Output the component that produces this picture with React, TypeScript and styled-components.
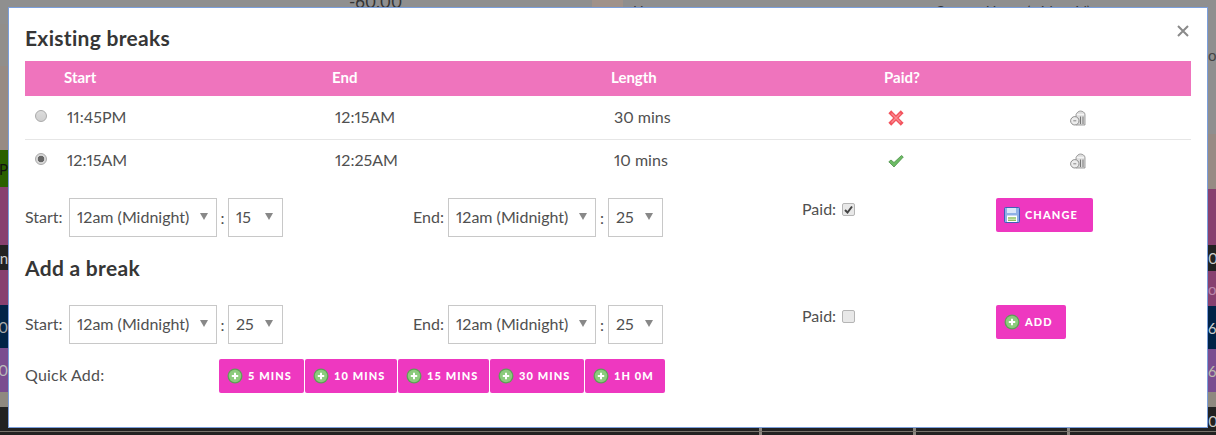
import React from "react";
import styled, { createGlobalStyle } from "styled-components";

const Global = createGlobalStyle`
  html, body { margin: 0; padding: 0; background: #8f8f8f; }
  body { font-family: Lato, "Noto Sans", sans-serif; font-variant-numeric: proportional-nums; overflow: hidden; }
  * { box-sizing: border-box; }
`;

const Page = styled.div`
  position: relative;
  width: 1216px;
  height: 435px;
  overflow: hidden;
  background: #8f8f8f;
`;

const Backdrop = styled.div`
  display: flex;
  justify-content: space-between;
  height: 100%;
`;

const Strip = styled.div`
  width: 8px;
  height: 100%;
  display: flex;
  flex-direction: column;
  overflow: hidden;
`;

const Band = styled.div<{ $h: number; $c: string; $fg?: string; $right?: boolean }>`
  height: ${(p) => p.$h}px;
  flex: none;
  background: ${(p) => p.$c};
  color: ${(p) => p.$fg || "#ccc"};
  font-size: 15px;
  display: flex;
  align-items: center;
  justify-content: ${(p) => (p.$right ? "flex-start" : "flex-end")};
  white-space: nowrap;
`;

const BottomEdge = styled.div`
  position: absolute;
  left: 0;
  right: 0;
  bottom: 0;
  height: 8px;
  background: #222;
  &::after {
    content: "";
    position: absolute;
    left: 0;
    right: 0;
    top: 4px;
    height: 1px;
    background: #77736c;
  }
`;

const BottomTick = styled.span<{ $x: number }>`
  position: absolute;
  left: ${(p) => p.$x}px;
  top: 0;
  width: 3px;
  height: 8px;
  background: #8a857e;
`;

const TopPatch = styled.div`
  position: absolute;
  left: 592px;
  top: 0;
  width: 31px;
  height: 8px;
  background: #a0928a;
`;

const TopText = styled.span<{ $x: number; $y: number; $s: number }>`
  position: absolute;
  left: ${(p) => p.$x}px;
  top: ${(p) => p.$y}px;
  font-size: ${(p) => p.$s}px;
  line-height: 1;
  color: #333;
  white-space: nowrap;
`;

const Modal = styled.div`
  position: absolute;
  left: 8px;
  top: 7px;
  width: 1200px;
  height: 421px;
  background: #fff;
  border: 1px solid #7b9fdc;
  padding: 15px 16px 0;
  color: #505050;
`;

const Close = styled.button`
  position: absolute;
  top: 15px;
  right: 17px;
  width: 14px;
  height: 16px;
  padding: 0;
  border: 0;
  background: none;
  display: flex;
  align-items: center;
`;

const Heading = styled.h2<{ $mt?: number }>`
  margin: ${(p) => p.$mt || 0}px 0 0;
  font-size: 21px;
  letter-spacing: 0.3px;
  line-height: 30px;
  height: 30px;
  font-weight: 700;
  color: #363636;
`;

const Columns = "39px 268px 279px 273px 182px 125px";

const HeadRow = styled.div`
  margin-top: 8px;
  display: grid;
  grid-template-columns: ${Columns};
  height: 35px;
  padding-bottom: 3px;
  align-items: center;
  background: #ef74bd;
  color: #fff;
  font-size: 15px;
  font-weight: 700;
`;

const Row = styled.div<{ $border?: boolean }>`
  display: grid;
  grid-template-columns: ${Columns};
  height: ${(p) => (p.$border ? 44 : 43)}px;
  padding-bottom: ${(p) => (p.$border ? 0 : 2)}px;
  align-items: center;
  border-bottom: ${(p) => (p.$border ? "1px solid #e6e6e6" : "0")};
  font-size: 16px;
`;

const Cell = styled.div`
  padding: 0 0 3px 3px;
  white-space: nowrap;
`;

const IconCell = styled.div`
  padding-left: 4px;
  display: flex;
  align-items: center;
`;

const Radio = styled.span<{ $on?: boolean }>`
  display: block;
  width: 12px;
  height: 12px;
  margin: -3px 0 0 10px;
  border-radius: 50%;
  border: 1px solid #a9a9a9;
  background: ${(p) =>
    p.$on
      ? "radial-gradient(circle, #666 0 3px, #d8d8d8 3.6px)"
      : "linear-gradient(#dcdcdc, #cfcfcf)"};
`;

const FormRow = styled.div<{ $mt: number }>`
  margin-top: ${(p) => p.$mt}px;
  display: grid;
  grid-template-columns: 388px 389px 194px 1fr;
  height: 39px;
  font-size: 16px;
`;

const TimeGroup = styled.div`
  display: flex;
  align-items: center;
  height: 39px;
`;

const FieldLabel = styled.span<{ $w: number }>`
  width: ${(p) => p.$w}px;
  flex: none;
  padding-bottom: 2px;
`;

const Colon = styled.span<{ $w: number }>`
  width: ${(p) => p.$w}px;
  text-align: center;
  flex: none;
`;

const Select = styled.div<{ $w: number; $pr: number }>`
  width: ${(p) => p.$w}px;
  height: 39px;
  flex: none;
  border: 1px solid #c8c8c8;
  display: flex;
  align-items: center;
  justify-content: space-between;
  padding: 0 ${(p) => p.$pr}px 2px 7px;
  white-space: nowrap;
  background: #fff;
`;

const Caret = styled.span`
  width: 0;
  height: 0;
  border-left: 4px solid transparent;
  border-right: 4px solid transparent;
  border-top: 7px solid #888;
`;

const PaidGroup = styled.div`
  display: flex;
  align-items: flex-start;
  padding-top: 1px;
  height: 39px;
`;

const PaidLabel = styled.span`
  line-height: 20px;
`;

const Check = styled.span`
  width: 13px;
  height: 13px;
  margin: 4px 0 0 6px;
  border: 1px solid #b5b5b5;
  border-radius: 2px;
  background: #e8e8e8;
  display: flex;
  align-items: center;
  justify-content: center;
`;

const Btn = styled.button<{ $w: number }>`
  width: ${(p) => p.$w}px;
  height: 34px;
  flex: none;
  padding: 0 0 1px 8px;
  border: 0;
  border-radius: 2px;
  background: #ee38c0;
  color: #fff;
  font-family: Lato, "Noto Sans", sans-serif;
  font-size: 11px;
  font-weight: 900;
  letter-spacing: 1.1px;
  display: flex;
  align-items: center;
  gap: 5px;
  white-space: nowrap;
`;

const BtnIcon = styled.svg`
  flex: none;
  margin-top: 1px;
`;

const QuickRow = styled.div`
  margin-top: 15px;
  display: flex;
  align-items: center;
  height: 34px;
  font-size: 16px;
`;

const QuickLabel = styled.span`
  width: 194px;
  flex: none;
  padding-bottom: 4px;
  letter-spacing: 0.2px;
`;

const QuickButtons = styled.div`
  display: flex;
  gap: 1px;
`;

const PlusIcon = () => (
  <BtnIcon width="16" height="16" viewBox="0 0 16 16">
    <circle cx="8" cy="8" r="7.5" fill="#5d9f55" />
    <circle cx="8" cy="8" r="6.2" fill="#8ccb7d" />
    <path d="M8 4.800v6.400M4.800 8h6.400" stroke="#fff" strokeWidth="2" />
  </BtnIcon>
);

const SaveIcon = () => (
  <BtnIcon width="16" height="16" viewBox="0 0 16 16">
    <rect x="0.500" y="0.500" width="15" height="15" rx="1" fill="#8fb0e6" stroke="#3f5fb8" />
    <rect x="3" y="1" width="9" height="5" fill="#dbe7f9" />
    <rect x="3" y="8.500" width="10" height="6.500" fill="#fff" />
    <path d="M4 11h8M4 13.300h8" stroke="#8fc25f" strokeWidth="1.500" />
  </BtnIcon>
);

const CrossIcon = () => (
  <svg width="16" height="16" viewBox="0 0 16 16">
    <path d="M3.200 3.200l9.600 9.600M12.800 3.200l-9.600 9.600" stroke="#f2545e" strokeWidth="4" strokeLinecap="square" />
    <path d="M3.500 3.500l9 9M12.500 3.500l-9 9" stroke="#fb8a90" strokeWidth="1.400" />
  </svg>
);

const TickIcon = () => (
  <svg width="16" height="16" viewBox="0 0 16 16">
    <path d="M.8 8.800L3 7l3 2.500L13.500 2.500l1.800 1.500L6 14z" fill="#6cbb64" stroke="#4b8f48" strokeWidth="0.800" />
  </svg>
);

const BinIcon = () => (
  <svg width="16" height="16" viewBox="0 0 16 16">
    <path d="M6 4.500C7 2.500 8.500 1 10.500 1s4.500 1.500 4.500 3.500V15H6z" fill="#dcdcdc" stroke="#8c8c8c" strokeWidth="0.800" />
    <path d="M7 4.500h7" stroke="#f4f4f4" strokeWidth="1.500" />
    <path d="M10.500 6.500v7.500M13 6.500v7.500" stroke="#777" strokeWidth="1" />
    <circle cx="4.800" cy="10.800" r="4.200" fill="#ececec" stroke="#8c8c8c" strokeWidth="1" />
    <path d="M3.300 10.800h3" stroke="#888" strokeWidth="1" />
  </svg>
);

const TimeSelects = ({
  label, labelW, colonW, hour, minute,
}: { label: string; labelW: number; colonW: number; hour: string; minute: string }) => (
  <TimeGroup>
    <FieldLabel $w={labelW}>{label}</FieldLabel>
    <Select $w={148} $pr={8}>
      <span>{hour}</span>
      <Caret />
    </Select>
    <Colon $w={colonW}>:</Colon>
    <Select $w={55} $pr={9}>
      <span>{minute}</span>
      <Caret />
    </Select>
  </TimeGroup>
);

const left: [number, string, string?, string?][] = [
  [24, "#8f8f8f"], [42, "#918e8b"], [84, "#978b84"], [37, "#2a6000", "#111", "P"],
  [58, "#87406f"], [25, "#222", "#ccc", "n"], [35, "#87406f"], [43, "#012347", "#aaa", "0"],
  [44, "#7a4d90", "#bbb", "0"], [15, "#8f8980"], [28, "#222"],
];
const right: [number, string, string?, string?][] = [
  [33, "#8f8f8f"], [44, "#8f8f8f", "#444", "ow"], [57, "#8f8f8f"], [55, "#978b84"],
  [56, "#87406f"], [26, "#222", "#ccc", "0"], [35, "#87406f", "#bb88aa", "os"],
  [43, "#012347", "#ccc", "6"], [43, "#7a4d90", "#bba", "6"], [15, "#8f8980"], [28, "#222", "#ccc", "0"],
];

const quick = [
  { t: "5 MINS", w: 85 },
  { t: "10 MINS", w: 92 },
  { t: "15 MINS", w: 91 },
  { t: "30 MINS", w: 94 },
  { t: "1H 0M", w: 80 },
];

export default function App() {
  return (
    <Page>
      <Global />
      <Backdrop>
        <Strip>
          {left.map(([h, c, fg, t], i) => (
            <Band key={i} $h={h} $c={c} $fg={fg}>{t}</Band>
          ))}
        </Strip>
        <Strip>
          {right.map(([h, c, fg, t], i) => (
            <Band key={i} $h={h} $c={c} $fg={fg} $right>{t}</Band>
          ))}
        </Strip>
      </Backdrop>
      <TopPatch />
      <TopText $x={349} $y={-7} $s={17}>-60.00</TopText>
      <TopText $x={633} $y={4} $s={14}>H</TopText>
      <TopText $x={935} $y={4} $s={14}>Current Hours (with paid)</TopText>
      <BottomEdge>
        <BottomTick $x={759} />
        <BottomTick $x={913} />
        <BottomTick $x={1067} />
      </BottomEdge>
      <Modal>
        <Close aria-label="Close">
          <svg width="14" height="14" viewBox="0 0 14 14">
            <path d="M2 2l10 10M12 2L2 12" stroke="#8a8a8a" strokeWidth="2" />
          </svg>
        </Close>
        <Heading>Existing breaks</Heading>
        <HeadRow>
          <span />
          <span>Start</span>
          <span>End</span>
          <span>Length</span>
          <span>Paid?</span>
          <span />
        </HeadRow>
        <Row $border>
          <Radio />
          <Cell>11:45PM</Cell>
          <Cell>12:15AM</Cell>
          <Cell>30 mins</Cell>
          <IconCell><CrossIcon /></IconCell>
          <IconCell><BinIcon /></IconCell>
        </Row>
        <Row>
          <Radio $on />
          <Cell>12:15AM</Cell>
          <Cell>12:25AM</Cell>
          <Cell>10 mins</Cell>
          <IconCell><TickIcon /></IconCell>
          <IconCell><BinIcon /></IconCell>
        </Row>
        <FormRow $mt={15}>
          <TimeSelects label="Start:" labelW={44} colonW={11} hour="12am (Midnight)" minute="15" />
          <TimeSelects label="End:" labelW={35} colonW={12} hour="12am (Midnight)" minute="25" />
          <PaidGroup>
            <PaidLabel>Paid:</PaidLabel>
            <Check>
              <svg width="9" height="9" viewBox="0 0 9 9">
                <path d="M1 5l2.500 2.500L8 1.500" fill="none" stroke="#444" strokeWidth="2" />
              </svg>
            </Check>
          </PaidGroup>
          <Btn $w={97}><SaveIcon /><span>CHANGE</span></Btn>
        </FormRow>
        <Heading $mt={16}>Add a break</Heading>
        <FormRow $mt={22}>
          <TimeSelects label="Start:" labelW={44} colonW={11} hour="12am (Midnight)" minute="25" />
          <TimeSelects label="End:" labelW={35} colonW={12} hour="12am (Midnight)" minute="25" />
          <PaidGroup>
            <PaidLabel>Paid:</PaidLabel>
            <Check />
          </PaidGroup>
          <Btn $w={70}><PlusIcon /><span>ADD</span></Btn>
        </FormRow>
        <QuickRow>
          <QuickLabel>Quick Add:</QuickLabel>
          <QuickButtons>
            {quick.map((q) => (
              <Btn key={q.t} $w={q.w}><PlusIcon /><span>{q.t}</span></Btn>
            ))}
          </QuickButtons>
        </QuickRow>
      </Modal>
    </Page>
  );
}
